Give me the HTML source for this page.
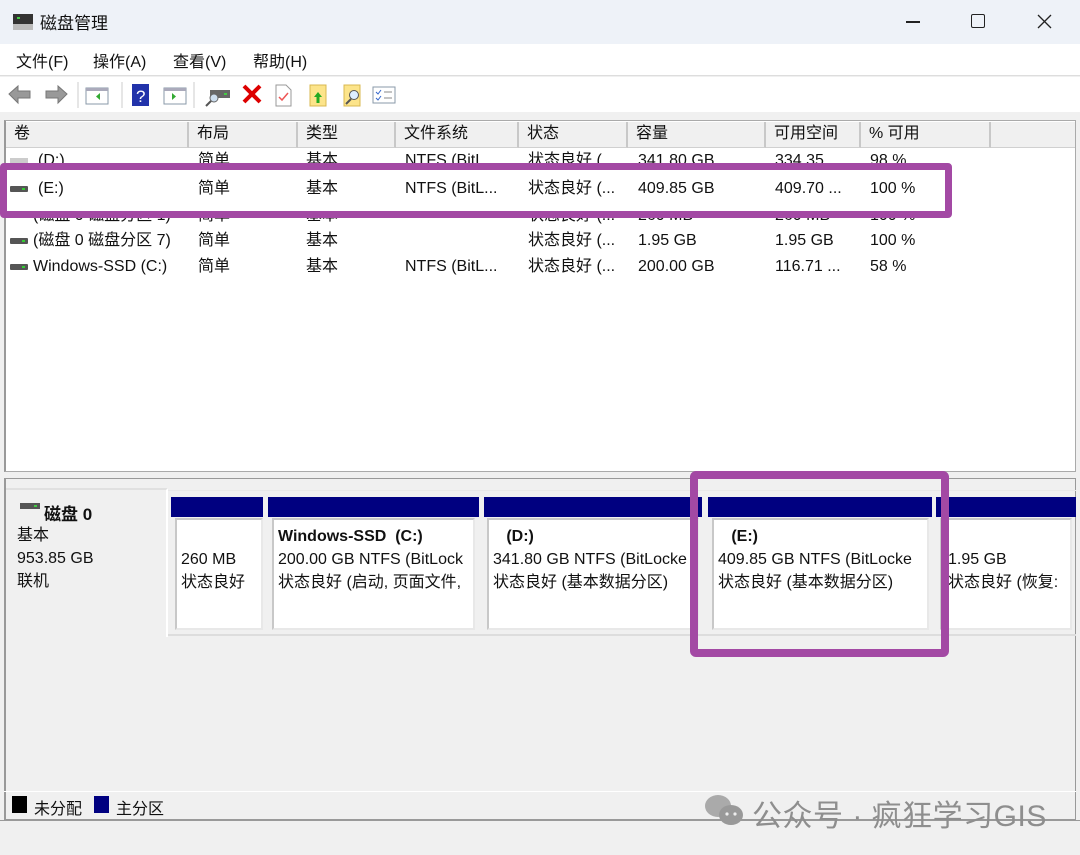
<!DOCTYPE html>
<html><head><meta charset="utf-8"><style>
*{margin:0;padding:0;box-sizing:border-box}
body{width:1080px;height:855px;position:relative;overflow:hidden;background:#f0f0f0;font-family:"Liberation Sans","Noto Sans CJK SC",sans-serif;font-size:16px;color:#111}
.a{position:absolute;white-space:nowrap}
.hd{position:absolute;top:122px;height:26px;background:#f0f0f0;border-right:2px solid #c8c8c8;border-bottom:1px solid #d0d0d0;padding-left:8px;line-height:24px;font-size:16px}
.ic{position:absolute;width:18px;height:6px;background:#555;border-radius:1px}
.ic:after{content:"";position:absolute;right:3px;top:2px;width:3px;height:2px;background:#3c3}
.bar{position:absolute;top:497px;height:20px;background:#000080}
.pb{position:absolute;top:518px;height:112px;background:#fff;border:2px solid #c8c8c8;border-right-color:#e8e8e8;border-bottom-color:#e8e8e8;padding:5px 0 0 4px;overflow:hidden;line-height:23px}
</style></head><body>
<!-- title -->
<div class="a" style="left:0;top:0;width:1080px;height:44px;background:#eef2f8"></div>
<svg class="a" style="left:12px;top:13px" width="22" height="18"><rect x="1" y="1" width="20" height="10" fill="#333"/><rect x="5" y="4" width="3" height="2" fill="#4c4"/><rect x="1" y="11" width="20" height="6" fill="#bbb"/></svg>
<div class="a" style="left:40px;top:9px;font-size:17px">磁盘管理</div>
<div class="a" style="left:906px;top:21px;width:14px;height:1.5px;background:#222"></div>
<div class="a" style="left:971px;top:14px;width:14px;height:14px;border:1.5px solid #222;border-radius:2px"></div>
<svg class="a" style="left:1037px;top:14px" width="15" height="15"><path d="M1 1L14 14M14 1L1 14" stroke="#222" stroke-width="1.3"/></svg>
<!-- menu -->
<div class="a" style="left:0;top:44px;width:1080px;height:32px;background:#fff;border-bottom:1px solid #ddd"></div>
<div class="a" style="left:16px;top:48px">文件(F)</div>
<div class="a" style="left:93px;top:48px">操作(A)</div>
<div class="a" style="left:173px;top:48px">查看(V)</div>
<div class="a" style="left:253px;top:48px">帮助(H)</div>
<!-- toolbar -->
<div class="a" style="left:0;top:77px;width:1080px;height:35px;background:#fff"></div>
<svg class="a" style="left:6px;top:82px" width="400" height="26">
<path d="M3 12L12 4V9H24V16H12V21Z" fill="#999" stroke="#777"/>
<path d="M61 12L52 4V9H40V16H52V21Z" fill="#999" stroke="#777"/>
<line x1="72" y1="0" x2="72" y2="26" stroke="#ccc"/>
<rect x="80" y="6" width="22" height="16" fill="#fff" stroke="#8a9aa8"/><rect x="80" y="6" width="22" height="3" fill="#aab"/><path d="M94 11v7l-4-3.5z" fill="#3a3"/>
<line x1="116" y1="0" x2="116" y2="26" stroke="#ccc"/>
<rect x="126" y="2" width="17" height="22" fill="#2233aa"/><text x="130" y="20" fill="#fff" font-size="17" font-family="Liberation Sans">?</text>
<rect x="158" y="6" width="22" height="16" fill="#fff" stroke="#8a9aa8"/><rect x="158" y="6" width="22" height="3" fill="#aab"/><path d="M166 11v7l4-3.5z" fill="#3a3"/>
<line x1="188" y1="0" x2="188" y2="26" stroke="#ccc"/>
<rect x="204" y="8" width="20" height="8" fill="#666"/><rect x="218" y="11" width="3" height="2" fill="#4c4"/><circle cx="208" cy="16" r="4" fill="#cde" stroke="#666"/><line x1="205" y1="19" x2="200" y2="24" stroke="#555" stroke-width="2"/>
<path d="M238 4L254 20M254 4L238 20" stroke="#d00" stroke-width="4"/>
<path d="M270 3h10l5 5v16h-15z" fill="#fff" stroke="#999"/><path d="M273 15l3 3 6-7" stroke="#e55" stroke-width="1.5" fill="none"/>
<rect x="304" y="3" width="16" height="21" fill="#fce48a" stroke="#d8b850"/><path d="M312 10l-4 5h2.5v6h3v-6h2.5z" fill="#2a2"/>
<rect x="338" y="3" width="16" height="21" fill="#fce48a" stroke="#d8b850"/><circle cx="348" cy="13" r="4.5" fill="#def" stroke="#555"/><line x1="345" y1="17" x2="340" y2="22" stroke="#555" stroke-width="2"/>
<rect x="367" y="5" width="22" height="16" fill="#fff" stroke="#8a9aa8"/><path d="M370 10l2 2 3-4M370 16l2 2 3-4" stroke="#36c" fill="none"/><path d="M378 10h8M378 16h8" stroke="#888"/>
</svg>
<!-- list -->
<div class="a" style="left:4px;top:120px;width:1072px;height:352px;background:#fff;border:1px solid #aaa;border-left:2px solid #999"></div>
<div class="hd" style="left:6px;width:183px">卷</div>
<div class="hd" style="left:189px;width:109px">布局</div>
<div class="hd" style="left:298px;width:98px">类型</div>
<div class="hd" style="left:396px;width:123px">文件系统</div>
<div class="hd" style="left:519px;width:109px">状态</div>
<div class="hd" style="left:628px;width:138px">容量</div>
<div class="hd" style="left:766px;width:95px">可用空间</div>
<div class="hd" style="left:861px;width:130px">% 可用</div>
<div class="hd" style="left:991px;width:84px;border-right:none"></div>
<div class="a" style="left:0;top:151px;width:1000px;height:130px;line-height:26px">
<div class="a" style="top:0;left:0;height:13px;width:1000px;overflow:hidden"><div style="position:relative;top:-3px"><span class="a" style="left:10px;top:10px;width:18px;height:6px;background:#ccc"></span><span class="a" style="left:38px">(D:)</span><span class="a" style="left:198px">简单</span><span class="a" style="left:306px">基本</span><span class="a" style="left:405px">NTFS (BitL...</span><span class="a" style="left:528px">状态良好 (...</span><span class="a" style="left:638px">341.80 GB</span><span class="a" style="left:775px">334.35 ...</span><span class="a" style="left:870px">98 %</span></div></div>
<div class="a" style="top:25px;left:0;width:1000px"><span class="ic" style="left:10px;top:10px"></span><span class="a" style="left:38px">(E:)</span><span class="a" style="left:198px">简单</span><span class="a" style="left:306px">基本</span><span class="a" style="left:405px">NTFS (BitL...</span><span class="a" style="left:528px">状态良好 (...</span><span class="a" style="left:638px">409.85 GB</span><span class="a" style="left:775px">409.70 ...</span><span class="a" style="left:870px">100 %</span></div>
<div class="a" style="top:66px;left:0;height:12px;width:1000px;overflow:hidden"><div style="position:relative;top:-14px"><span class="a" style="left:33px">(磁盘 0 磁盘分区 1)</span><span class="a" style="left:198px">简单</span><span class="a" style="left:306px">基本</span><span class="a" style="left:528px">状态良好 (...</span><span class="a" style="left:638px">260 MB</span><span class="a" style="left:775px">260 MB</span><span class="a" style="left:870px">100 %</span></div></div>
<div class="a" style="top:77px;left:0;width:1000px"><span class="ic" style="left:10px;top:10px"></span><span class="a" style="left:33px">(磁盘 0 磁盘分区 7)</span><span class="a" style="left:198px">简单</span><span class="a" style="left:306px">基本</span><span class="a" style="left:528px">状态良好 (...</span><span class="a" style="left:638px">1.95 GB</span><span class="a" style="left:775px">1.95 GB</span><span class="a" style="left:870px">100 %</span></div>
<div class="a" style="top:103px;left:0;width:1000px"><span class="ic" style="left:10px;top:10px"></span><span class="a" style="left:33px">Windows-SSD (C:)</span><span class="a" style="left:198px">简单</span><span class="a" style="left:306px">基本</span><span class="a" style="left:405px">NTFS (BitL...</span><span class="a" style="left:528px">状态良好 (...</span><span class="a" style="left:638px">200.00 GB</span><span class="a" style="left:775px">116.71 ...</span><span class="a" style="left:870px">58 %</span></div>
</div>
<div class="a" style="left:0;top:163px;width:952px;height:55px;border:7px solid #a349a4;border-radius:4px"></div>
<!-- lower -->
<div class="a" style="left:4px;top:478px;width:1072px;height:342px;border:1px solid #999;border-left:2px solid #999;background:#f0f0f0"></div>
<div class="a" style="left:6px;top:488px;width:162px;height:149px;background:#f0f0f0;border-right:2px solid #fff;border-top:2px solid #e0e0e0"></div>
<svg class="a" style="left:20px;top:503px" width="20" height="8"><rect width="20" height="6" fill="#555"/><rect x="14" y="2" width="3" height="2" fill="#4c4"/></svg>
<div class="a" style="left:44px;top:500px;font-weight:bold;font-size:17px">磁盘 0</div>
<div class="a" style="left:17px;top:524px;line-height:23px">基本<br>953.85 GB<br>联机</div>
<div class="a" style="left:168px;top:490px;width:908px;height:146px;border-bottom:2px solid #ddd;border-top:1px solid #e8e8e8"></div>
<div class="bar" style="left:171px;width:92px"></div>
<div class="bar" style="left:268px;width:211px"></div>
<div class="bar" style="left:484px;width:218px"></div>
<div class="bar" style="left:708px;width:224px"></div>
<div class="bar" style="left:936px;width:140px"></div>
<div class="pb" style="left:175px;width:88px"><br>260 MB<br>状态良好</div>
<div class="pb" style="left:272px;width:203px"><b>Windows-SSD&nbsp; (C:)</b><br>200.00 GB NTFS (BitLock<br>状态良好 (启动, 页面文件,</div>
<div class="pb" style="left:487px;width:212px">&nbsp; &nbsp;<b>(D:)</b><br>341.80 GB NTFS (BitLocke<br>状态良好 (基本数据分区)</div>
<div class="pb" style="left:712px;width:217px">&nbsp; &nbsp;<b>(E:)</b><br>409.85 GB NTFS (BitLocke<br>状态良好 (基本数据分区)</div>
<div class="pb" style="left:940px;width:132px;padding-left:6px"><br>1.95 GB<br>状态良好 (恢复:</div>
<div class="a" style="left:690px;top:471px;width:259px;height:186px;border:8px solid #a349a4;border-radius:6px"></div>
<!-- legend -->
<div class="a" style="left:4px;top:791px;width:1072px;height:1px;background:#fff"></div>
<div class="a" style="left:12px;top:796px;width:15px;height:17px;background:#000"></div>
<div class="a" style="left:34px;top:795px">未分配</div>
<div class="a" style="left:94px;top:796px;width:15px;height:17px;background:#000080"></div>
<div class="a" style="left:116px;top:795px">主分区</div>
<div class="a" style="left:0;top:820px;width:1080px;height:1px;background:#999"></div>
<svg class="a" style="left:703px;top:793px" width="42" height="36"><ellipse cx="15" cy="13" rx="13" ry="11" fill="#aaa"/><ellipse cx="28" cy="22" rx="12" ry="10" fill="#999"/><circle cx="24" cy="21" r="1.6" fill="#eee"/><circle cx="32" cy="21" r="1.6" fill="#eee"/></svg>
<div class="a" style="left:752px;top:791px;font-size:30px;color:#8e8e8e;letter-spacing:0.5px;font-family:'Liberation Sans','Noto Sans CJK SC',sans-serif">公众号 · 疯狂学习GIS</div>
</body></html>
